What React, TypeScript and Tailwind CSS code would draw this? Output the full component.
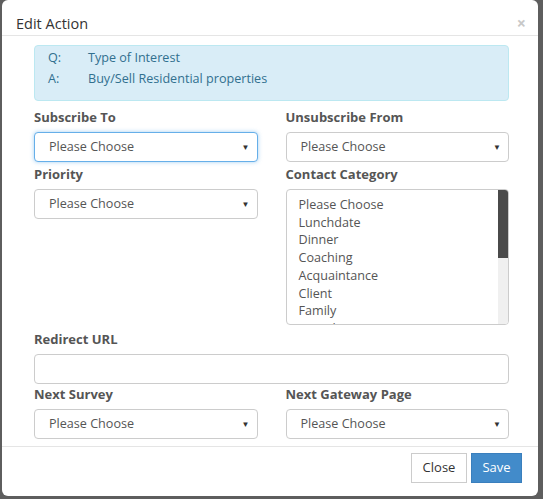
import React from "react";

const CATEGORIES = [
  "Please Choose",
  "Lunchdate",
  "Dinner",
  "Coaching",
  "Acquaintance",
  "Client",
  "Family",
  "Friend",
];

const Label = ({ children }: { children: React.ReactNode }) => (
  <div className="mb-[5px] h-5 text-[13px] font-bold leading-5 text-[#555]">
    {children}
  </div>
);

const Select = ({ focused = false }: { focused?: boolean }) => (
  <div
    className={
      "flex h-[30px] items-center justify-between rounded-[4px] border bg-white pl-[14px] pr-[7px] text-[12.6px] text-[#555] " +
      (focused
        ? "border-[#66afe9] shadow-[0_0_4px_rgba(102,175,233,0.6)]"
        : "border-[#ccc]")
    }
  >
    <span>Please Choose</span>
    <span className="text-[8px] text-[#333]">▼</span>
  </div>
);

export default function App() {
  return (
    <div
      className="h-[499px] w-[543px] overflow-hidden bg-[#5e5e5e] pl-[2px] pr-[5px]"
      style={{ fontFamily: '"Open Sans", "Noto Sans", sans-serif' }}
    >
      <div className="flex h-[496px] flex-col rounded-[6px] bg-white">
        {/* Header */}
        <div className="flex h-[36px] items-start justify-between border-b border-[#e5e5e5] pl-[14px] pr-[12px] pt-[14px]">
          <span className="text-[14.5px] leading-5 text-[#333]">Edit Action</span>
          <span className="mt-[-1px] text-[16px] font-bold leading-5 text-[#c8c8c8]">×</span>
        </div>

        {/* Body */}
        <div className="flex-1 pl-[32px] pr-[29px] pt-[9px]">
          <div className="rounded-[4px] border border-[#bce8f1] bg-[#d9edf7] pb-[11px] pl-[13px] pt-[1px] text-[12.6px] leading-[21px] text-[#31708f]">
            <div className="flex">
              <span className="w-[40px]">Q:</span>
              <span>Type of Interest</span>
            </div>
            <div className="flex">
              <span className="w-[40px]">A:</span>
              <span>Buy/Sell Residential properties</span>
            </div>
          </div>

          <div className="mt-[6px] grid grid-cols-2 gap-x-[28px]">
            <div>
              <Label>Subscribe To</Label>
              <Select focused />
            </div>
            <div>
              <Label>Unsubscribe From</Label>
              <Select />
            </div>
          </div>

          <div className="mt-[2px] grid grid-cols-2 gap-x-[28px]">
            <div>
              <Label>Priority</Label>
              <Select />
            </div>
            <div>
              <Label>Contact Category</Label>
              <div className="flex h-[136px] overflow-hidden rounded-[4px] border border-[#ccc] bg-white">
                <div className="flex-1 pl-[12px] pt-[6px] text-[12.6px] leading-[17.7px] text-[#555]">
                  {CATEGORIES.map((c) => (
                    <div key={c}>{c}</div>
                  ))}
                </div>
                <div className="flex w-[10px] flex-col bg-[#f0f0f0]">
                  <div className="h-[68px] bg-[#4a4a4a]" />
                </div>
              </div>
            </div>
          </div>

          <div className="mt-[4px]">
            <Label>Redirect URL</Label>
            <div className="h-[30px] rounded-[4px] border border-[#ccc] bg-white" />
          </div>

          <div className="grid grid-cols-2 gap-x-[28px]">
            <div>
              <Label>Next Survey</Label>
              <Select />
            </div>
            <div>
              <Label>Next Gateway Page</Label>
              <Select />
            </div>
          </div>
        </div>

        {/* Footer */}
        <div className="flex h-[50px] items-start justify-end gap-[4px] border-t border-[#e5e5e5] pr-[16px] pt-[6px]">
          <button className="h-[30px] w-[56px] border border-[#ccc] bg-white text-[13px] text-[#333]">
            Close
          </button>
          <button className="h-[30px] w-[51px] border border-[#3a7fbd] bg-[#428bca] text-[13px] text-white">
            Save
          </button>
        </div>
      </div>
    </div>
  );
}
